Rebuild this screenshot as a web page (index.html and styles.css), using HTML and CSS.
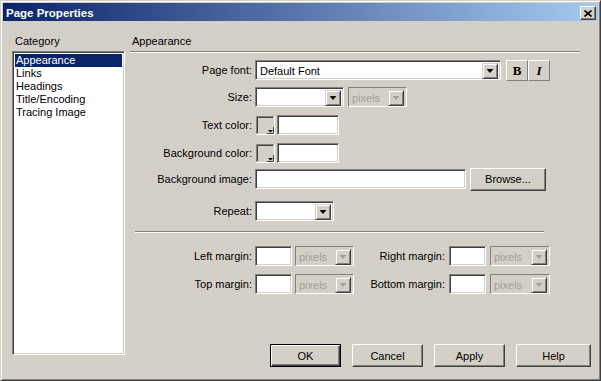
FILE: index.html
```html
<!DOCTYPE html>
<html lang="en">
<head>
    <meta charset="UTF-8">
    <title>Page Properties</title>
    <link rel="stylesheet" href="styles.css">
</head>
<body>
    <div class="window">
        <div class="titlebar">
            <span class="title">Page Properties</span>
            <button class="close-btn" aria-label="Close">
                <svg width="8" height="7" viewBox="0 0 8 7">
                    <path d="M0.5 0.5 L7.5 6.5 M7.5 0.5 L0.5 6.5" stroke="#000" stroke-width="1.6" fill="none"/>
                </svg>
            </button>
        </div>

        <div class="dialog">
            <div class="category">
                <div class="caption">Category</div>
                <ul class="listbox">
                    <li class="selected">Appearance</li>
                    <li>Links</li>
                    <li>Headings</li>
                    <li>Title/Encoding</li>
                    <li>Tracing Image</li>
                </ul>
            </div>

            <div class="panel">
                <div class="caption heading">Appearance</div>
                <div class="rule"></div>

                <div class="row first">
                    <label>Page font:</label>
                    <div class="select w-font"><span class="value">Default Font</span><span class="arrow"></span></div>
                    <div class="style-btns">
                        <button class="tool bold">B</button>
                        <button class="tool italic">I</button>
                    </div>
                </div>

                <div class="row row-size">
                    <label>Size:</label>
                    <div class="select w-size"><span class="value"></span><span class="arrow"></span></div>
                    <div class="select disabled w-unit gap4"><span class="value">pixels</span><span class="arrow"></span></div>
                </div>

                <div class="row">
                    <label>Text color:</label>
                    <span class="swatch">
                        <svg width="19" height="19" viewBox="0 0 19 19">
                            <rect x="0" y="0" width="19" height="19" fill="#d4d0c8"/>
                            <path d="M0.5 18 V0.5 H18" stroke="#808080" fill="none"/>
                            <path d="M1.5 17 V1.5 H17" stroke="#404040" fill="none"/>
                            <path d="M18.5 0 V18.5 H0" stroke="#fff" fill="none"/>
                            <path d="M11 17.5 H17.5 V11" stroke="#404040" fill="none"/>
                            <path d="M12 14 H17 L14.5 16.5 Z" fill="#000"/>
                        </svg>
                    </span>
                    <div class="field w-hex gap2"></div>
                </div>

                <div class="row">
                    <label>Background color:</label>
                    <span class="swatch">
                        <svg width="19" height="19" viewBox="0 0 19 19">
                            <rect x="0" y="0" width="19" height="19" fill="#d4d0c8"/>
                            <path d="M0.5 18 V0.5 H18" stroke="#808080" fill="none"/>
                            <path d="M1.5 17 V1.5 H17" stroke="#404040" fill="none"/>
                            <path d="M18.5 0 V18.5 H0" stroke="#fff" fill="none"/>
                            <path d="M11 17.5 H17.5 V11" stroke="#404040" fill="none"/>
                            <path d="M12 14 H17 L14.5 16.5 Z" fill="#000"/>
                        </svg>
                    </span>
                    <div class="field w-hex gap2"></div>
                </div>

                <div class="row row-image">
                    <label>Background image:</label>
                    <div class="field w-image"></div>
                    <button class="btn w-browse">Browse...</button>
                </div>

                <div class="row row-repeat">
                    <label>Repeat:</label>
                    <div class="select w-repeat"><span class="value"></span><span class="arrow"></span></div>
                </div>

                <div class="rule short"></div>

                <div class="row margin-row first-margin">
                    <label>Left margin:</label>
                    <div class="field w-num"></div>
                    <div class="select disabled w-unit gap3"><span class="value">pixels</span><span class="arrow"></span></div>
                    <label class="label-right">Right margin:</label>
                    <div class="field w-num"></div>
                    <div class="select disabled w-unit2 gap4"><span class="value">pixels</span><span class="arrow"></span></div>
                </div>

                <div class="row margin-row">
                    <label>Top margin:</label>
                    <div class="field w-num"></div>
                    <div class="select disabled w-unit gap3"><span class="value">pixels</span><span class="arrow"></span></div>
                    <label class="label-right">Bottom margin:</label>
                    <div class="field w-num"></div>
                    <div class="select disabled w-unit2 gap4"><span class="value">pixels</span><span class="arrow"></span></div>
                </div>

                <div class="buttons">
                    <button class="btn default">OK</button>
                    <button class="btn">Cancel</button>
                    <button class="btn">Apply</button>
                    <button class="btn help">Help</button>
                </div>
            </div>
        </div>
    </div>
</body>
</html>
```

FILE: styles.css
```css
* {
    box-sizing: border-box;
}
body {
    margin: 0;
    font-family: "Liberation Sans", Arial, sans-serif;
    font-size: 11px;
    color: #000;
    background: #d4d0c8;
}
button {
    font-family: inherit;
    font-size: inherit;
    color: #000;
    padding: 0;
    cursor: default;
}

/* window frame */
.window {
    width: 601px;
    height: 381px;
    background: #d4d0c8;
    border: 1px solid;
    border-color: #d4d0c8 #404040 #404040 #d4d0c8;
    box-shadow: inset 1px 1px #fff, inset -1px -1px #808080;
    padding: 2px;
    display: flex;
    flex-direction: column;
}
.titlebar {
    height: 18px;
    flex-shrink: 0;
    background: linear-gradient(to right, #0a246a, #a6caf0);
    display: flex;
    align-items: center;
    justify-content: space-between;
    padding: 0 2px 0 3px;
}
.title {
    color: #fff;
    font-weight: bold;
    font-size: 11.5px;
    line-height: 18px;
    padding-top: 1px;
}
.close-btn {
    width: 16px;
    height: 14px;
    margin-top: 2px;
    background: #d4d0c8;
    border: 1px solid;
    border-color: #fff #404040 #404040 #fff;
    box-shadow: inset -1px -1px #808080;
    display: flex;
    align-items: center;
    justify-content: center;
}

/* dialog body */
.dialog {
    flex: 1;
    display: flex;
    gap: 5px;
    padding: 14px 7px 11px 9px;
}
.caption {
    height: 13px;
    line-height: 13px;
    padding-left: 3px;
}
.category {
    width: 113px;
    flex-shrink: 0;
}
.listbox {
    list-style: none;
    margin: 3px 0 0;
    padding: 0;
    height: 304px;
    background: #fff;
    border: 1px solid;
    border-color: #808080 #fff #fff #808080;
    box-shadow: inset 1px 1px #404040, inset -1px -1px #d4d0c8;
    padding: 2px 2px;
}
.listbox li {
    height: 13px;
    line-height: 13px;
    padding-left: 1px;
}
.listbox li.selected {
    background: #0a246a;
    color: #fff;
}

.panel {
    flex: 1;
    display: flex;
    flex-direction: column;
}
.heading {
    padding-left: 2px;
}
.rule {
    width: 450px;
    height: 2px;
    margin-top: 3px;
    border-top: 1px solid #808080;
    border-bottom: 1px solid #fff;
}
.rule.short {
    width: 409px;
    margin: 9px 0 0 5px;
}

/* form rows */
.row {
    display: flex;
    align-items: center;
    height: 22px;
    margin-top: 6px;
}
.row-size {
    margin-top: 5px;
}
.row-image {
    margin-top: 4px;
}
.row-repeat {
    margin-top: 10px;
}
.first-margin {
    margin-top: 12px;
}
.row label {
    width: 122px;
    margin-right: 3px;
    text-align: right;
    white-space: nowrap;
}
.row .label-right {
    width: 91px;
    margin-right: 4px;
}

.field,
.select {
    height: 20px;
    background: #fff;
    border: 1px solid;
    border-color: #808080 #fff #fff #808080;
    box-shadow: inset 1px 1px #404040, inset -1px -1px #d4d0c8;
}
.select {
    display: flex;
    padding: 2px;
}
.select .value {
    flex: 1;
    line-height: 16px;
    padding-left: 2px;
    white-space: nowrap;
    overflow: hidden;
}
.select .arrow {
    width: 16px;
    height: 16px;
    flex-shrink: 0;
    background: #d4d0c8;
    border: 1px solid;
    border-color: #d4d0c8 #404040 #404040 #d4d0c8;
    box-shadow: inset 1px 1px #fff, inset -1px -1px #808080;
    display: flex;
    align-items: center;
    justify-content: center;
}
.select .arrow::after {
    content: "";
    width: 7px;
    height: 4px;
    background: #000;
    clip-path: polygon(0 0, 100% 0, 50% 100%);
}
.select.disabled {
    background: #d4d0c8;
    box-shadow: inset 1px 1px #d4d0c8;
    border-color: #808080 #fff #fff #808080;
}
.select.disabled .value {
    color: #a0a0a0;
    padding-left: 1px;
}
.select.disabled .arrow::after {
    background: #a0a0a0;
}

.swatch {
    display: block;
    width: 19px;
    height: 19px;
    margin-left: 1px;
}
.swatch svg {
    display: block;
}

.w-font { width: 246px; }
.w-size { width: 89px; }
.w-unit { width: 59px; }
.w-unit2 { width: 60px; }
.w-hex { width: 62px; }
.w-image { width: 211px; }
.w-repeat { width: 79px; }
.w-num { width: 37px; }
.gap2 { margin-left: 2px; }
.gap3 { margin-left: 3px; }
.gap4 { margin-left: 4px; }

.style-btns {
    display: flex;
    margin-left: 5px;
}
.tool {
    width: 22px;
    height: 21px;
    background: #d4d0c8;
    border: 1px solid;
    border-color: #fff #808080 #808080 #fff;
    font-family: "Liberation Serif", "Times New Roman", serif;
    font-size: 13px;
    font-weight: bold;
    line-height: 19px;
}
.tool.italic {
    font-style: italic;
}

/* push buttons */
.btn {
    height: 23px;
    background: #d4d0c8;
    border: 1px solid;
    border-color: #fff #404040 #404040 #fff;
    box-shadow: inset -1px -1px #808080;
    width: 71px;
}
.btn.default {
    border-color: #000;
    box-shadow: inset 1px 1px #fff, inset -1px -1px #404040, inset -2px -2px #808080;
}
.btn.help {
    width: 75px;
}
.w-browse {
    width: 76px;
    margin-left: 4px;
}
.buttons {
    margin-top: auto;
    display: flex;
    justify-content: flex-end;
    gap: 11px;
}
```
